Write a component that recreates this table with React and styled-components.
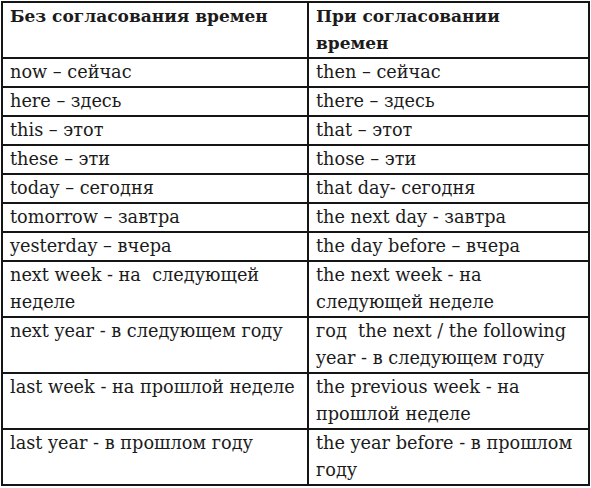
import styled, { createGlobalStyle } from 'styled-components';

const GlobalStyle = createGlobalStyle`
    body {
        margin: 0;
        background: #ffffff;
    }
`;

const Table = styled.table`
    margin: 1px 0 0 1px;
    width: 589px;
    border-collapse: collapse;
    table-layout: fixed;
    font-family: 'DejaVu Serif', 'Liberation Serif', serif;
    font-size: 17.7px;
    color: #1b1b1b;
    border: 2px solid #151515;
`;

const Cell = styled.td`
    border: 2px solid #151515;
    padding: 0 5px 0 7px;
    line-height: 27px;
    vertical-align: top;
    white-space: pre;
`;

const HeadCell = styled(Cell).attrs({ as: 'th' })`
    text-align: left;
    font-weight: bold;
    font-size: 17px;
`;

const rows = [
    ['now – сейчас', 'then – сейчас'],
    ['here – здесь', 'there – здесь'],
    ['this – этот', 'that – этот'],
    ['these – эти', 'those – эти'],
    ['today – сегодня', 'that day- сегодня'],
    ['tomorrow – завтра', 'the next day - завтра'],
    ['yesterday – вчера', 'the day before – вчера'],
    ['next week - на  следующей\nнеделе', 'the next week - на\nследующей неделе'],
    ['next year - в следующем году', 'год  the next / the following\nyear - в следующем году'],
    ['last week - на прошлой неделе', 'the previous week - на\nпрошлой неделе'],
    ['last year - в прошлом году', 'the year before - в прошлом\nгоду'],
];

const App = () => {
    return (
        <>
            <GlobalStyle />
            <Table>
                <colgroup>
                    <col style={{ width: '306px' }} />
                    <col />
                </colgroup>
                <thead>
                    <tr>
                        <HeadCell>Без согласования времен</HeadCell>
                        <HeadCell>{'При согласовании\nвремен'}</HeadCell>
                    </tr>
                </thead>
                <tbody>
                    {rows.map(([left, right]) => (
                        <tr key={left}>
                            <Cell>{left}</Cell>
                            <Cell>{right}</Cell>
                        </tr>
                    ))}
                </tbody>
            </Table>
        </>
    );
};

export default App;
